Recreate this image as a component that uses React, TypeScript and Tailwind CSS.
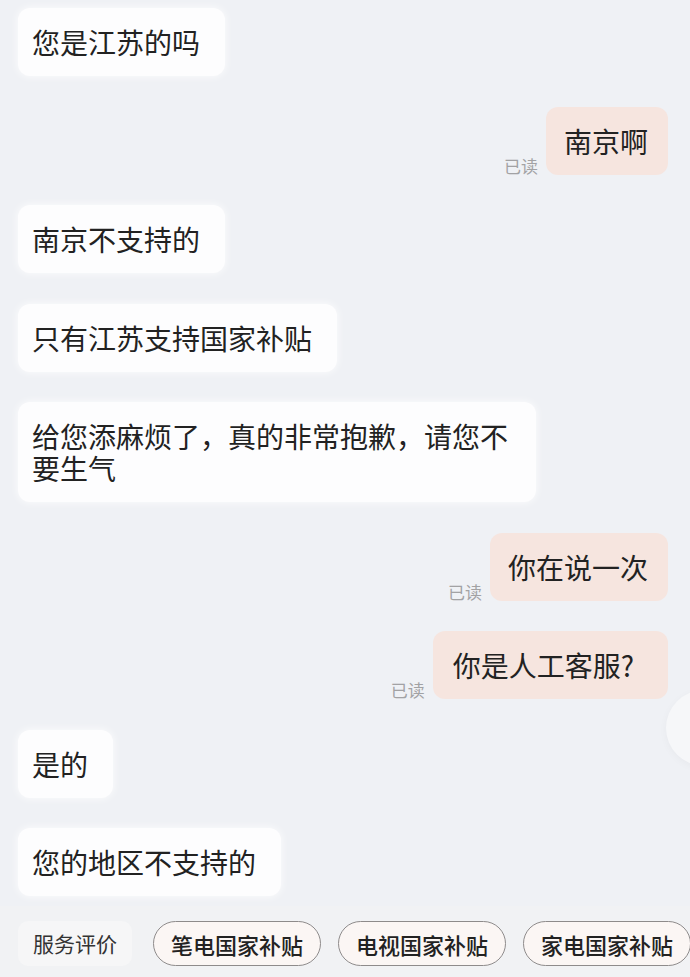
import React from "react";

type Msg = { side: "left" | "right"; text: string; read?: boolean; wide?: boolean };

const messages: Msg[] = [
  { side: "left", text: "您是江苏的吗" },
  { side: "right", text: "南京啊", read: true },
  { side: "left", text: "南京不支持的" },
  { side: "left", text: "只有江苏支持国家补贴" },
  { side: "left", text: "给您添麻烦了，真的非常抱歉，请您不要生气" },
  { side: "right", text: "你在说一次", read: true },
  { side: "right", text: "你是人工客服?", read: true, wide: true },
  { side: "left", text: "是的" },
  { side: "left", text: "您的地区不支持的" },
];

const font = {
  fontFamily: '"Noto Sans CJK SC", "Noto Sans", sans-serif',
};

function LeftBubble({ text }: { text: string }) {
  return (
    <div className="flex justify-start pl-[18px]">
      <div className="max-w-[518px] rounded-[12px] bg-[#fdfdfe] py-[18px] pl-[14px] pr-[25px] text-[28px] leading-[32px] text-[#222] shadow-[0_0_8px_rgba(255,255,255,0.9)]">
        {text}
      </div>
    </div>
  );
}

function RightBubble({ text, read, wide }: { text: string; read?: boolean; wide?: boolean }) {
  return (
    <div className="flex items-end justify-end gap-[8px] pr-[22px]">
      {read && (
        <span className="mb-[1px] text-[17px] leading-[17px] text-[#a2a2a4]">已读</span>
      )}
      <div
        className={
          wide
            ? "rounded-[12px] bg-[#f6e5df] py-[18px] pl-[20px] pr-[34px] text-[28px] leading-[32px] text-[#222]"
            : "rounded-[12px] bg-[#f6e5df] py-[18px] pl-[18px] pr-[20px] text-[28px] leading-[32px] text-[#222]"
        }
      >
        {text}
      </div>
    </div>
  );
}

function Pill({ label }: { label: string }) {
  return (
    <div className="flex h-[45px] shrink-0 items-center rounded-full border-[1.5px] border-[#8e8b8b] bg-[#fbf6f4] px-[17px] text-[22px] font-medium leading-none text-[#222]">
      {label}
    </div>
  );
}

export default function App() {
  return (
    <div
      className="relative flex h-[977px] w-[690px] flex-col overflow-hidden bg-[#eff1f5]"
      style={font}
    >
      {/* conversation */}
      <div className="flex flex-1 flex-col gap-[30.5px] pt-[8px]">
        {messages.map((m, i) =>
          m.side === "left" ? (
            <LeftBubble key={i} text={m.text} />
          ) : (
            <RightBubble key={i} text={m.text} read={m.read} wide={m.wide} />
          )
        )}
      </div>

      {/* floating helper button, partly off screen */}
      <div className="absolute left-[666px] top-[690px] h-[76px] w-[76px] rounded-full bg-[#f6f7f9] shadow-[0_2px_8px_rgba(0,0,0,0.035)]" />

      {/* quick actions */}
      <div className="flex shrink-0 items-center gap-[17px] bg-[#f1f2f4] pb-[11px] pl-[18px] pt-[15px]">
        <div className="mr-[4px] flex h-[45px] shrink-0 items-center rounded-[10px] bg-[#f6f6f7] px-[15px] text-[21px] leading-none text-[#333]">
          服务评价
        </div>
        <Pill label="笔电国家补贴" />
        <Pill label="电视国家补贴" />
        <Pill label="家电国家补贴" />
      </div>
    </div>
  );
}
